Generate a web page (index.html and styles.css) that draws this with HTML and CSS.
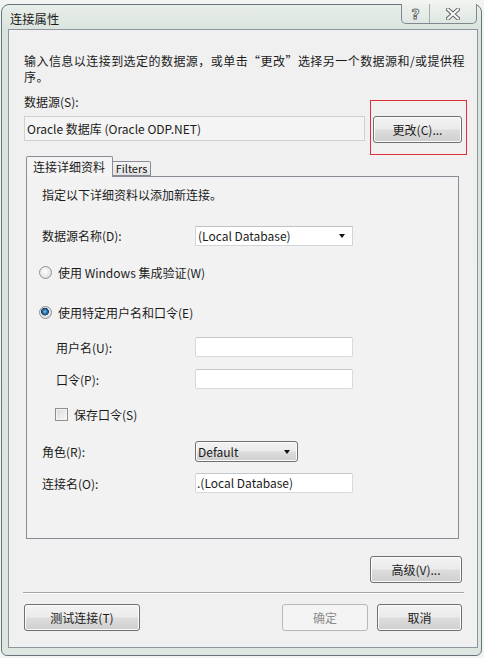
FILE: index.html
```html
<!DOCTYPE html>
<html lang="zh-CN">
<head>
<meta charset="utf-8">
<title>连接属性</title>
<link rel="stylesheet" href="styles.css">
</head>
<body>
<div class="window">
  <div class="titlebar">
    <span class="title">连接属性</span>
    <div class="caption">
      <span class="cap-btn cap-help">?</span>
      <span class="cap-btn cap-close">
        <svg width="14" height="12" viewBox="0 0 14 12"><path d="M2 1.5 L12 10.5 M12 1.5 L2 10.5" stroke="#5f6466" stroke-width="4" stroke-linecap="square"/><path d="M2 1.5 L12 10.5 M12 1.5 L2 10.5" stroke="#fbfbfb" stroke-width="2" stroke-linecap="square"/></svg>
      </span>
    </div>
  </div>
  <div class="client">
    <p class="intro">输入信息以连接到选定的数据源，或单击“更改”选择另一个数据源和/或提供程<br>序。</p>
    <div class="ds-label">数据源(S):</div>
    <div class="ds-row">
      <div class="ds-box">Oracle 数据库 (Oracle ODP.NET)</div>
      <div class="change-wrap">
        <button class="btn change-btn">更改(C)...</button>
        <span class="highlight"></span>
      </div>
    </div>
    <div class="tabs">
      <div class="tab tab-active">连接详细资料</div>
      <div class="tab tab-idle">Filters</div>
    </div>
    <div class="panel">
      <div class="p-text">指定以下详细资料以添加新连接。</div>
      <div class="row row-ds">
        <span class="label">数据源名称(D):</span>
        <div class="combo combo-white"><span class="combo-text">(Local Database)</span><span class="arrow"></span></div>
      </div>
      <div class="row row-radio1">
        <span class="radio"></span><span>使用 Windows 集成验证(W)</span>
      </div>
      <div class="row row-radio2">
        <span class="radio radio-checked"></span><span>使用特定用户名和口令(E)</span>
      </div>
      <div class="row row-user">
        <span class="label label-indent">用户名(U):</span>
        <div class="input"></div>
      </div>
      <div class="row row-pwd">
        <span class="label label-indent">口令(P):</span>
        <div class="input"></div>
      </div>
      <div class="row row-check">
        <span class="checkbox"></span><span>保存口令(S)</span>
      </div>
      <div class="row row-role">
        <span class="label">角色(R):</span>
        <div class="combo combo-button"><span class="combo-text">Default</span><span class="arrow"></span></div>
      </div>
      <div class="row row-conn">
        <span class="label">连接名(O):</span>
        <div class="input input-text">.(Local Database)</div>
      </div>
    </div>
    <div class="adv-row"><button class="btn adv-btn">高级(V)...</button></div>
    <div class="sep"></div>
    <div class="footer">
      <button class="btn test-btn">测试连接(T)</button>
      <div class="footer-right">
        <button class="btn ok-btn" disabled>确定</button>
        <button class="btn cancel-btn">取消</button>
      </div>
    </div>
  </div>
</div>
</body>
</html>
```
FILE: styles.css
```css
* { box-sizing: border-box; }
html, body { margin: 0; padding: 0; }
body {
  width: 484px;
  height: 658px;
  overflow: hidden;
  background: #f1f4f1;
  font-family: "Noto Sans CJK SC", "Noto Sans", sans-serif;
  font-size: 12px;
  color: #1b1b1b;
}
.window {
  margin: 4px 0 0 1px;
  width: 481px;
  height: 652px;
  border: 1px solid #69747a;
  border-radius: 8px 8px 6px 6px;
  background: linear-gradient(to bottom, #e8eee9 0, #dae3dd 26px, #dfe6e1 100%);
  display: flex;
  flex-direction: column;
}
.titlebar {
  height: 24px;
  display: flex;
  justify-content: space-between;
  align-items: flex-start;
}
.title {
  padding: 6px 0 0 8px;
  line-height: 16px;
  font-size: 12.3px;
}
.caption {
  display: flex;
  margin: -1px 4px 0 0;
  height: 20px;
  border: 1px solid #7f898f;
  border-top: none;
  border-radius: 0 0 5px 5px;
  background: linear-gradient(to bottom, #eef2ef, #dfe6e2);
  overflow: hidden;
}
.cap-btn {
  display: flex;
  align-items: center;
  justify-content: center;
}
.cap-help {
  width: 28px;
  border-right: 1px solid #a3abb0;
  font-family: "DejaVu Sans", sans-serif;
  font-weight: bold;
  font-size: 14px;
  color: #fdfdfd;
  -webkit-text-stroke: 0.9px #5f6466;
}
.cap-close { width: 46px; }
.client {
  flex: 1;
  margin: 0 3px 7px 6px;
  border: 1px solid #8d969c;
  background: #f0f0f0;
  padding: 0 15px;
  display: flex;
  flex-direction: column;
}
.intro {
  margin: 23px 0 0;
  line-height: 16px;
  white-space: nowrap;
  letter-spacing: 0.45px;
}
.ds-label {
  margin-top: 9px;
  line-height: 16px;
}
.ds-row {
  margin-top: 6px;
  display: flex;
  gap: 8px;
  align-items: flex-start;
}
.ds-box {
  width: 341px;
  height: 25px;
  border: 1px solid #cfd1d4;
  background: #f4f4f4;
  padding: 0 2px;
  line-height: 23px;
  white-space: nowrap;
}
.change-wrap { position: relative; }
.highlight {
  position: absolute;
  left: -3px;
  top: -16px;
  right: -5px;
  bottom: -12px;
  border: 1px solid #df2e38;
  pointer-events: none;
}
.btn {
  height: 27px;
  padding: 0;
  border: 1px solid #707070;
  border-radius: 3px;
  background: linear-gradient(to bottom, #f3f3f3 0%, #ebebeb 48%, #dddddd 52%, #cfcfcf 100%);
  box-shadow: inset 0 0 0 1px #fbfbfb;
  font: inherit;
  color: #1b1b1b;
  white-space: nowrap;
}
.btn:disabled {
  border-color: #b5b9bc;
  background: #f4f4f4;
  box-shadow: none;
  color: #8c8c8c;
}
.change-btn { width: 89px; }
.tabs {
  display: flex;
  align-items: flex-end;
  height: 20px;
  margin: 13px 0 0 2px;
  position: relative;
  z-index: 1;
}
.tab {
  border: 1px solid #898c95;
  white-space: nowrap;
}
.tab-active {
  width: 87px;
  height: 21px;
  margin-bottom: -1px;
  border-bottom: none;
  background: #f4f4f4;
  border-radius: 2px 2px 0 0;
  padding-left: 6px;
  line-height: 20px;
}
.tab-idle {
  width: 38px;
  height: 15px;
  border-left: none;
  border-radius: 0 2px 0 0;
  background: linear-gradient(to bottom, #f3f3f3, #e2e2e2);
  text-align: center;
  font-size: 11px;
  line-height: 13px;
  overflow: hidden;
}
.panel {
  width: 433px;
  height: 363px;
  margin-left: 2px;
  border: 1px solid #898c95;
  background: #f2f2f2;
  padding: 10px 0 0 15px;
}
.p-text { line-height: 16px; }
.row {
  display: flex;
  align-items: center;
  white-space: nowrap;
}
.label { width: 153px; flex: none; }
.label-indent { padding-left: 14px; }
.row-ds { margin-top: 22px; height: 21px; }
.row-radio1 { margin-top: 18px; height: 16px; }
.row-radio2 { margin-top: 24px; height: 16px; }
.row-user { margin-top: 17px; height: 20px; }
.row-pwd { margin-top: 12px; height: 20px; }
.row-check { margin-top: 17px; height: 16px; }
.row-role { margin-top: 19px; height: 21px; }
.row-conn { margin-top: 11px; height: 20px; }
.radio {
  width: 13px;
  height: 13px;
  margin: 0 6px 0 -3px;
  border-radius: 50%;
  border: 1px solid #8f9193;
  background: radial-gradient(circle at 45% 40%, #ffffff 0, #f0f0f0 35%, #d2d2d2 100%);
  flex: none;
}
.radio-checked {
  background:
    radial-gradient(circle at 45% 42%, #9fd0f2 0, #3a83bd 1.6px, #1a5688 3px, #0f3a61 3.6px, rgba(15,58,97,0) 4.2px),
    radial-gradient(circle at 45% 40%, #ffffff 0, #f0f0f0 35%, #d2d2d2 100%);
}
.checkbox {
  width: 13px;
  height: 13px;
  margin: 0 6px 0 13px;
  border: 1px solid #8f8f8f;
  background: linear-gradient(135deg, #d9d9d9, #f9f9f9);
  box-shadow: inset 0 0 0 1px #f4f4f4;
  flex: none;
}
.input {
  width: 158px;
  height: 20px;
  border: 1px solid #d8d9dc;
  border-top-color: #c3c6cb;
  border-radius: 2px;
  background: #ffffff;
}
.input-text {
  padding-left: 1px;
  line-height: 18px;
}
.combo {
  display: flex;
  align-items: center;
  height: 21px;
  padding: 0 5px 0 2px;
}
.combo-white {
  width: 158px;
  height: 20px;
  border: 1px solid #d3d5d9;
  border-top-color: #bfc2c7;
  background: #ffffff;
}
.combo-button {
  width: 103px;
  border: 1px solid #707070;
  border-radius: 3px;
  background: linear-gradient(to bottom, #f3f3f3 0%, #ebebeb 48%, #dddddd 52%, #cfcfcf 100%);
  box-shadow: inset 0 0 0 1px #fbfbfb;
}
.combo-text { flex: 1; }
.arrow {
  width: 0;
  height: 0;
  border-left: 3.5px solid transparent;
  border-right: 3.5px solid transparent;
  border-top: 4px solid #111;
  margin-right: 2px;
}
.adv-row {
  margin-top: 17px;
  display: flex;
  justify-content: flex-end;
}
.adv-btn { width: 92px; }
.sep {
  margin: 9px -2px 0 -1px;
  height: 2px;
  border-top: 1px solid #a5a5a5;
  border-bottom: 1px solid #fdfdfd;
}
.footer {
  margin-top: 10px;
  display: flex;
  justify-content: space-between;
}
.test-btn { width: 116px; }
.footer-right { display: flex; gap: 9px; }
.ok-btn { width: 86px; }
.cancel-btn { width: 85px; }
```
